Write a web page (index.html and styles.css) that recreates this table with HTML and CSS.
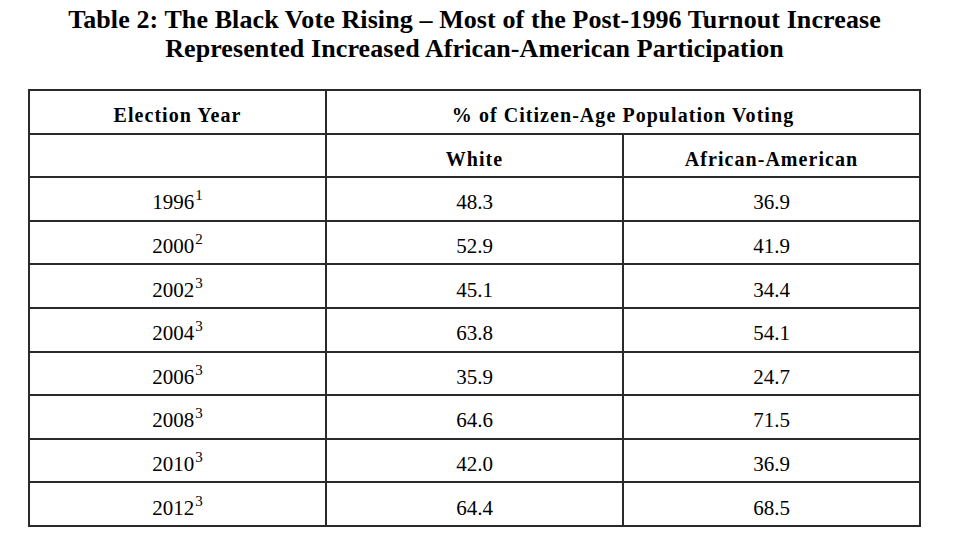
FILE: index.html
```html
<!DOCTYPE html>
<html>
<head>
<meta charset="utf-8">
<link rel="stylesheet" href="styles.css">
</head>
<body>
<div class="page">
  <h1 class="title">Table 2: The Black Vote Rising – Most of the Post-1996 Turnout Increase<br>Represented Increased African-American Participation</h1>
  <table class="data">
    <colgroup><col class="c1"><col class="c2"><col class="c3"></colgroup>
    <tr class="row"><th>Election Year</th><th colspan="2">% of Citizen-Age Population Voting</th></tr>
    <tr class="row"><th></th><th>White</th><th>African-American</th></tr>
    <tr class="row"><td>1996<sup>1</sup></td><td>48.3</td><td>36.9</td></tr>
    <tr class="row"><td>2000<sup>2</sup></td><td>52.9</td><td>41.9</td></tr>
    <tr class="row"><td>2002<sup>3</sup></td><td>45.1</td><td>34.4</td></tr>
    <tr class="row"><td>2004<sup>3</sup></td><td>63.8</td><td>54.1</td></tr>
    <tr class="row"><td>2006<sup>3</sup></td><td>35.9</td><td>24.7</td></tr>
    <tr class="row"><td>2008<sup>3</sup></td><td>64.6</td><td>71.5</td></tr>
    <tr class="row"><td>2010<sup>3</sup></td><td>42.0</td><td>36.9</td></tr>
    <tr class="row"><td>2012<sup>3</sup></td><td>64.4</td><td>68.5</td></tr>
  </table>
</div>
</body>
</html>
```
FILE: styles.css
```css
html, body {
  margin: 0;
  padding: 0;
  background: #fff;
}
body {
  font-family: "Liberation Serif", "Times New Roman", serif;
  color: #000;
}
.page {
  width: 893px;
  padding: 5px 0 0 28px;
}
.title {
  margin: 0;
  font-size: 26px;
  line-height: 29px;
  font-weight: bold;
  text-align: center;
  letter-spacing: 0.1px;
}
.data {
  margin-top: 26px;
  width: 893px;
  border-collapse: collapse;
  table-layout: fixed;
  border: 2px solid #2a2a2a;
}
.data th, .data td {
  border: 2px solid #2a2a2a;
  text-align: center;
  padding: 8px 0 0 0;
  height: 33.6px;
  vertical-align: middle;
}
.data th {
  font-size: 20px;
  font-weight: bold;
  letter-spacing: 1.05px;
}
.data td {
  font-size: 21px;
  font-weight: normal;
}
.data sup {
  font-size: 15px;
  line-height: 0;
  vertical-align: 9px;
  margin-left: 1px;
}
```
